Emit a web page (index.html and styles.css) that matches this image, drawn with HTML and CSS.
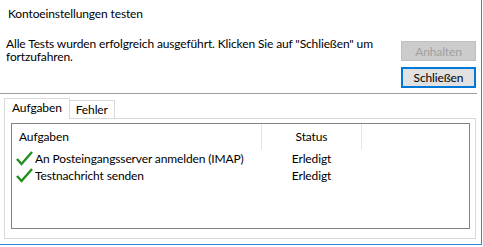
FILE: index.html
```html
<!DOCTYPE html>
<html lang="de">
<head>
<meta charset="UTF-8" />
<title>Kontoeinstellungen testen</title>
<link rel="stylesheet" href="styles.css">
</head>
<body>
<div class="window">
  <div class="title">Kontoeinstellungen testen</div>

  <div class="top">
    <p class="message">Alle Tests wurden erfolgreich ausgeführt. Klicken Sie auf "Schließen" um fortzufahren.</p>
    <div class="buttons">
      <button class="btn" disabled>Anhalten</button>
      <button class="btn btn-default">Schließen</button>
    </div>
  </div>

  <div class="separator"></div>

  <div class="tabs">
    <div class="tab active">Aufgaben</div>
    <div class="tab">Fehler</div>
  </div>

  <div class="tab-panel">
    <div class="list">
      <div class="list-row list-head">
        <div class="col col-task">Aufgaben</div>
        <div class="col col-status">Status</div>
        <div class="col col-rest"></div>
      </div>
      <div class="list-row">
        <div class="col col-task">
          <svg class="check" width="17" height="15" viewBox="0 0 17 15"><path d="M1 8 L5.5 13 L16 1" /></svg>
          An Posteingangsserver anmelden (IMAP)
        </div>
        <div class="col col-status">Erledigt</div>
      </div>
      <div class="list-row">
        <div class="col col-task">
          <svg class="check" width="17" height="15" viewBox="0 0 17 15"><path d="M1 8 L5.5 13 L16 1" /></svg>
          Testnachricht senden
        </div>
        <div class="col col-status">Erledigt</div>
      </div>
    </div>
  </div>
</div>
</body>
</html>
```

FILE: styles.css
```css
body {
  margin: 0;
  background: #ffffff;
  font-family: Lato, "Noto Sans", sans-serif;
  font-size: 12px;
  letter-spacing: -0.13px;
  color: #000000;
}
.window {
  width: 481px;
  height: 244px;
  border-right: 1px solid #2b88d8;
  border-bottom: 1px solid #2b88d8;
  background: #ffffff;
  overflow: hidden;
}
.title {
  padding: 6px 0 0 8px;
  height: 20px;
  line-height: 16px;
  font-size: 12px;
}
.top {
  display: flex;
  justify-content: space-between;
  padding: 0 5px 0 6px;
  height: 67px;
}
.message {
  margin: 11px 0 0 0;
  width: 385px;
  line-height: 13px;
}
.buttons {
  display: flex;
  flex-direction: column;
  gap: 6px;
  padding-top: 15px;
}
.btn {
  font-family: inherit;
  font-size: 12px;
  letter-spacing: inherit;
  width: 75px;
  height: 20px;
  padding: 0;
  background: #e1e1e1;
  border: 1px solid #adadad;
  color: #000000;
}
.btn:disabled {
  background: #cccccc;
  border-color: #bfbfbf;
  color: #a0a0a0;
}
.btn-default {
  height: 21px;
  border: 2px solid #0078d7;
}
.separator {
  height: 1px;
  width: 477px;
  background: #a0a0a0;
}
.tabs {
  display: flex;
  align-items: flex-end;
  margin: 3px 0 0 4px;
  height: 21px;
}
.tab {
  border: 1px solid #d9d9d9;
  border-bottom: none;
  padding: 0 6px;
  height: 17px;
  line-height: 17px;
  background: #ffffff;
}
.tab.active {
  height: 20px;
  line-height: 18px;
  padding: 0 7px;
  position: relative;
  top: 1px;
}
.tab + .tab {
  border-left: none;
}
.tab-panel {
  margin-left: 4px;
  width: 459px;
  height: 110px;
  border: 1px solid #d9d9d9;
  padding: 4px 5px 5px 6px;
}
.list {
  height: 104px;
  border: 1px solid #828282;
  background: #ffffff;
}
.list-row {
  display: flex;
  height: 17px;
  line-height: 17px;
}
.list-head {
  height: 26px;
  line-height: 26px;
}
.col {
  white-space: nowrap;
}
.col-task {
  width: 250px;
  display: flex;
  align-items: center;
  padding-left: 4px;
  box-sizing: border-box;
}
.list-head .col-task {
  padding-left: 7px;
  border-right: 1px solid #e5e5e5;
}
.col-status {
  width: 99px;
  text-align: center;
}
.list-head .col-status {
  border-right: 1px solid #e5e5e5;
}
.check {
  margin-right: 2px;
  flex: none;
}
.check path {
  fill: none;
  stroke: #1f8f1f;
  stroke-width: 2.4;
  stroke-linejoin: miter;
}
```
